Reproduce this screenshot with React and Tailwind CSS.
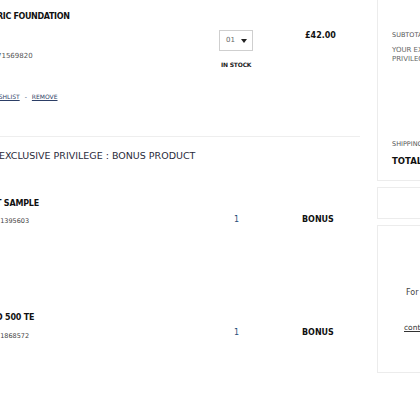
export default function App() {
  const font = { fontFamily: '"DejaVu Sans", "Open Sans", sans-serif' };
  return (
    <div className="w-[420px] h-[420px] bg-white overflow-hidden flex text-[#111]" style={font}>
      {/* main column */}
      <div className="w-[360px] shrink-0 flex flex-col">
        {/* product row */}
        <div className="h-[137px] flex border-b border-[#eeeeee]">
          <div className="w-[222px] shrink-0 -ml-[3px] pt-[12px] flex flex-col">
            <div className="text-[8px] font-bold leading-[9px] tracking-[-0.35px] whitespace-nowrap">RIC FOUNDATION</div>
            <div className="mt-[31px] text-[7px] leading-[8px] text-[#555] whitespace-nowrap">71569820</div>
            <div className="mt-[33px] text-[6px] leading-[7px] text-[#2c3e66] whitespace-nowrap flex gap-[5px]">
              <span className="underline">ISHLIST</span>
              <span>-</span>
              <span className="underline">REMOVE</span>
            </div>
          </div>
          <div className="w-[86px] shrink-0 pt-[30px] flex flex-col">
            <div className="w-[34px] h-[21px] border border-[#cfcfcf] flex items-center justify-between pl-[6px] pr-[5px]">
              <span className="text-[7px] text-[#666]">01</span>
              <svg width="6" height="4" viewBox="0 0 6 4"><path d="M0 0 L6 0 L3 4 Z" fill="#222" /></svg>
            </div>
            <div className="mt-[9px] ml-[2px] text-[6px] font-bold tracking-[-0.2px] text-[#222] whitespace-nowrap">IN STOCK</div>
          </div>
          <div className="pt-[30px] text-[8px] font-bold whitespace-nowrap">£42.00</div>
        </div>
        {/* heading */}
        <div className="h-[37px] flex items-center -ml-[1px] pt-[1px]">
          <span className="text-[9.5px] text-[#2a2a3a] whitespace-nowrap">EXCLUSIVE PRIVILEGE : BONUS PRODUCT</span>
        </div>
        {/* bonus row 1 */}
        <div className="h-[114px] flex pt-[25px]">
          <div className="w-[238px] shrink-0 -ml-[4px] flex flex-col">
            <div className="text-[8px] font-bold leading-[10px] tracking-[-0.2px] whitespace-nowrap">T SAMPLE</div>
            <div className="mt-[8px] text-[6.5px] leading-[8px] text-[#444] whitespace-nowrap">71395603</div>
          </div>
          <div className="w-[68px] shrink-0 pt-[16px] text-[8px] text-[#1f4e79] leading-[10px]">1</div>
          <div className="pt-[16px] text-[8px] font-bold leading-[10px]">BONUS</div>
        </div>
        {/* bonus row 2 */}
        <div className="flex pt-[25px]">
          <div className="w-[238px] shrink-0 -ml-[4px] flex flex-col">
            <div className="text-[8px] font-bold leading-[10px] tracking-[-0.2px] whitespace-nowrap">D 500 TE</div>
            <div className="mt-[9px] text-[6.5px] leading-[8px] text-[#444] whitespace-nowrap">71868572</div>
          </div>
          <div className="w-[68px] shrink-0 pt-[15px] text-[8px] text-[#1f4e79] leading-[10px]">1</div>
          <div className="pt-[15px] text-[8px] font-bold leading-[10px]">BONUS</div>
        </div>
      </div>
      {/* right column */}
      <div className="ml-[17px] w-[200px] shrink-0 flex flex-col gap-[6px] -mt-[10px]">
        <div className="h-[191px] border border-[#ececec] pl-[14px] flex flex-col">
          <div className="mt-[40px] text-[6.5px] text-[#555] leading-[8px] whitespace-nowrap">SUBTOTAL</div>
          <div className="mt-[7px] text-[7px] text-[#666] leading-[9px] whitespace-nowrap">YOUR EXCLUSIVE<br />PRIVILEGE</div>
          <div className="mt-[76px] text-[6.5px] text-[#555] leading-[8px] whitespace-nowrap">SHIPPING</div>
          <div className="mt-[8px] text-[8.5px] font-bold leading-[10px] whitespace-nowrap">TOTAL</div>
        </div>
        <div className="h-[32px] border border-[#ececec]"></div>
        <div className="h-[148px] border border-[#ececec] flex flex-col">
          <div className="mt-[61px] pl-[28px] text-[8px] text-[#444] whitespace-nowrap">For more</div>
          <div className="mt-[23px] pl-[26px] text-[7.5px] text-[#333] underline whitespace-nowrap">contact us</div>
        </div>
      </div>
    </div>
  );
}
